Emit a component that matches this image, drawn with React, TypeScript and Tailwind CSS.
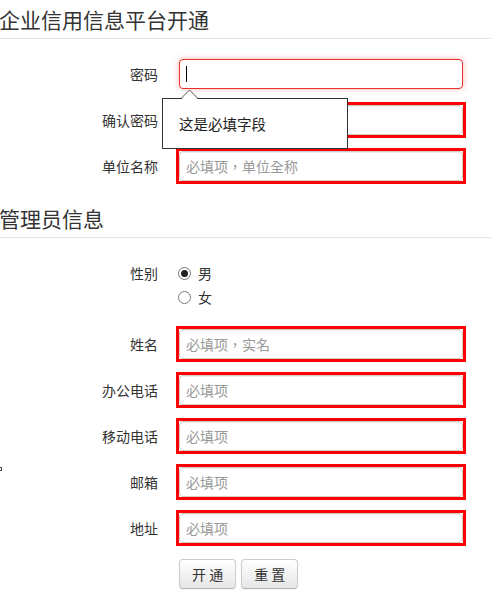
import React from 'react';

const font = { fontFamily: '"Noto Sans CJK SC", "Noto Sans", sans-serif' };
const inputFont = { fontFamily: '"Noto Sans CJK TC", "Noto Sans CJK SC", sans-serif' };

function Legend({ children }: { children: React.ReactNode }) {
  return (
    <div className="h-[39px] border-b border-[#e5e5e5] text-[21px] leading-[38px] text-[#333] -ml-px">
      {children}
    </div>
  );
}

function Label({ children }: { children: React.ReactNode }) {
  return (
    <div className="w-[158px] shrink-0 text-right text-[14px] text-[#333] leading-[30px]">
      {children}
    </div>
  );
}

function Field({ label, placeholder, last }: { label: string; placeholder: string; last?: boolean }) {
  return (
    <div className={`flex items-start ${last ? '' : 'mb-4'}`}>
      <Label>{label}</Label>
      <div className="-my-[3px] ml-[18px] border-[3px] border-[#ff0000]">
        <input
          type="text"
          placeholder={placeholder}
          className="block h-[30px] w-[284px] rounded-[4px] border border-[#ccc] bg-white px-[6px] text-[14px] text-[#555] shadow-[inset_0_1px_1px_rgba(0,0,0,0.075)] outline-none placeholder:text-[#999]"
          style={inputFont}
        />
      </div>
    </div>
  );
}

function Radio({ checked, label }: { checked?: boolean; label: string }) {
  return (
    <div className="flex h-[24px] items-center">
      <span className="flex h-[13px] w-[13px] items-center justify-center rounded-full border border-[#777] bg-white">
        {checked && <span className="h-[7px] w-[7px] rounded-full bg-[#222]" />}
      </span>
      <span className="ml-[7px] text-[14px] text-[#333]">{label}</span>
    </div>
  );
}

function Button({ children }: { children: React.ReactNode }) {
  return (
    <button
      className="h-[30px] rounded-[4px] border border-[#ccc] border-b-[#b3b3b3] bg-linear-to-b from-white to-[#e6e6e6] px-3 text-[14px] leading-5 text-[#333] shadow-[inset_0_1px_0_rgba(255,255,255,0.2),0_1px_2px_rgba(0,0,0,0.05)]"
      style={font}
    >
      {children}
    </button>
  );
}

export default function App() {
  return (
    <div className="relative h-[597px] w-[491px] overflow-hidden bg-white" style={font}>
      <Legend>企业信用信息平台开通</Legend>

      <div className="mt-5">
        <div className="mb-4 flex items-start">
          <Label>密码</Label>
          <div className="ml-[21px] flex h-[30px] w-[284px] items-center rounded-[4px] border border-[#e9322d] bg-white px-[6px] shadow-[0_0_6px_#f8b9b7]">
            <span className="h-[16px] w-px bg-black" />
          </div>
        </div>
        <Field label="确认密码" placeholder="" />
        <Field label="单位名称" placeholder="必填项，单位全称" last />
      </div>

      <div className="mt-[18px]">
        <Legend>管理员信息</Legend>
      </div>

      <div className="mt-[23px] flex items-start">
        <div className="w-[158px] shrink-0 text-right text-[14px] leading-[24px] text-[#333]">性别</div>
        <div className="ml-[20px]">
          <Radio checked label="男" />
          <Radio label="女" />
        </div>
      </div>

      <div className="mt-[20px]">
        <Field label="姓名" placeholder="必填项，实名" />
        <Field label="办公电话" placeholder="必填项" />
        <Field label="移动电话" placeholder="必填项" />
        <Field label="邮箱" placeholder="必填项" />
        <Field label="地址" placeholder="必填项" />
      </div>

      <div className="ml-[179px] flex gap-[5px]">
        <Button>开 通</Button>
        <Button>重 置</Button>
      </div>

      {/* validation bubble */}
      <div className="absolute left-[162px] top-[98px] flex h-[51px] w-[186px] items-center border border-[#333] bg-white pl-4 text-[14.5px] text-[#222]">
        这是必填字段
      </div>
      <svg className="absolute left-[181px] top-[89px]" width="17" height="11" viewBox="0 0 17 11">
        <polygon points="0,10.5 8.5,1 17,10.5" fill="white" />
        <polyline points="0,9.5 8.5,1 17,9.5" fill="none" stroke="#555" strokeWidth="1" />
      </svg>

      <div className="absolute -left-[2px] top-[467px] h-[4px] w-[4px] border border-[#444]" />
    </div>
  );
}
